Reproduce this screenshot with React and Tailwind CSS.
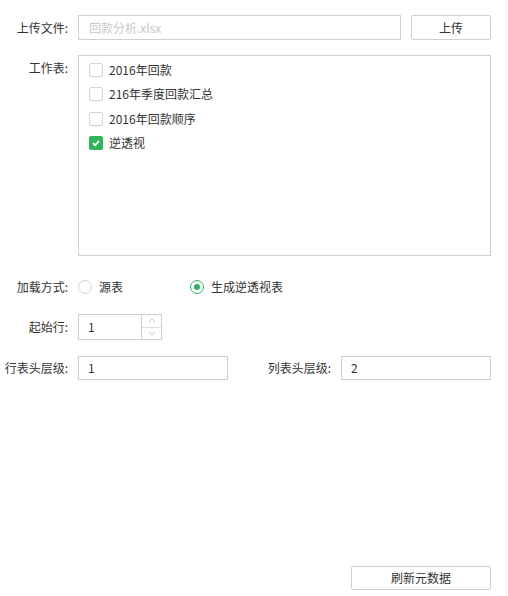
import React from "react";

const sheets = [
  { name: "2016年回款", checked: false },
  { name: "216年季度回款汇总", checked: false },
  { name: "2016年回款顺序", checked: false },
  { name: "逆透视", checked: true },
];

function Label({ children }) {
  return (
    <div className="w-[70px] shrink-0 pr-[2px] text-right text-[12px] text-[#333]">{children}</div>
  );
}

function Checkbox({ checked }) {
  if (checked) {
    return (
      <span className="w-[14px] h-[14px] rounded-[2px] bg-[#2fb45a] flex items-center justify-center">
        <svg width="10" height="10" viewBox="0 0 10 10">
          <path d="M2 5.2 L4.2 7.2 L8 3" fill="none" stroke="#fff" strokeWidth="1.8" />
        </svg>
      </span>
    );
  }
  return <span className="w-[14px] h-[14px] rounded-[2px] border border-[#d4d4d4] bg-white" />;
}

function Radio({ checked }) {
  return (
    <span
      className={
        checked
          ? "w-[14px] h-[14px] rounded-full border border-[#2fb45a] flex items-center justify-center"
          : "w-[14px] h-[14px] rounded-full border border-[#d4d4d4]"
      }
    >
      {checked && <span className="w-[6px] h-[6px] rounded-full bg-[#2fb45a]" />}
    </span>
  );
}

export default function App() {
  return (
    <div
      className="w-[507px] h-[596px] border-r border-[#ececec] bg-white text-[12px] text-[#333] flex flex-col"
      style={{ fontFamily: '"Noto Sans CJK SC", "Liberation Sans", sans-serif' }}
    >
      {/* 上传文件 */}
      <div className="flex items-center mt-[15px] h-[25px]">
        <Label>上传文件:</Label>
        <div className="ml-[8px] w-[323px] h-[25px] border border-[#cfcfcf] flex items-center px-[10px] text-[#c8c8c8]">
          回款分析.xlsx
        </div>
        <button className="ml-[10px] w-[80px] h-[25px] border border-[#cfcfcf] rounded-[2px] bg-white text-[#333]">
          上传
        </button>
      </div>

      {/* 工作表 */}
      <div className="flex mt-[15px]">
        <div className="pt-[4px]">
          <Label>工作表:</Label>
        </div>
        <div className="ml-[8px] w-[413px] h-[201px] border border-[#cfcfcf] pt-[2px] px-[10px]">
          {sheets.map((s) => (
            <div key={s.name} className="flex items-center h-[24.3px] gap-[6px]">
              <Checkbox checked={s.checked} />
              <span>{s.name}</span>
            </div>
          ))}
        </div>
      </div>

      {/* 加载方式 */}
      <div className="flex items-center mt-[20px] h-[22px]">
        <Label>加载方式:</Label>
        <div className="ml-[8px] flex items-center gap-[7px] w-[112px]">
          <Radio />
          <span>源表</span>
        </div>
        <div className="flex items-center gap-[7px]">
          <Radio checked />
          <span>生成逆透视表</span>
        </div>
      </div>

      {/* 起始行 */}
      <div className="flex items-center mt-[16px] h-[26px]">
        <Label>起始行:</Label>
        <div className="ml-[8px] w-[84px] h-[26px] border border-[#cfcfcf] flex">
          <div className="flex-1 flex items-center px-[9px]">1</div>
          <div className="w-[20px] border-l border-[#cfcfcf] flex flex-col">
            <div className="flex-1 flex items-center justify-center border-b border-[#e0e0e0]">
              <svg width="8" height="5" viewBox="0 0 8 5">
                <path d="M1 4 L4 1 L7 4" fill="none" stroke="#c4c4c4" strokeWidth="1" />
              </svg>
            </div>
            <div className="flex-1 flex items-center justify-center">
              <svg width="8" height="5" viewBox="0 0 8 5">
                <path d="M1 1 L4 4 L7 1" fill="none" stroke="#c4c4c4" strokeWidth="1" />
              </svg>
            </div>
          </div>
        </div>
      </div>

      {/* 行/列表头层级 */}
      <div className="flex items-center mt-[16px] h-[24px]">
        <Label>行表头层级:</Label>
        <div className="ml-[8px] w-[150px] h-[24px] border border-[#cfcfcf] flex items-center px-[9px]">1</div>
        <div className="ml-[35px]">
          <Label>列表头层级:</Label>
        </div>
        <div className="ml-[8px] w-[150px] h-[24px] border border-[#cfcfcf] flex items-center px-[9px]">2</div>
      </div>

      <div className="flex-1" />

      <div className="flex justify-end pr-[15px] mb-[6px]">
        <button className="w-[140px] h-[24px] border border-[#cfcfcf] rounded-[2px] bg-white text-[#333]">
          刷新元数据
        </button>
      </div>
    </div>
  );
}
